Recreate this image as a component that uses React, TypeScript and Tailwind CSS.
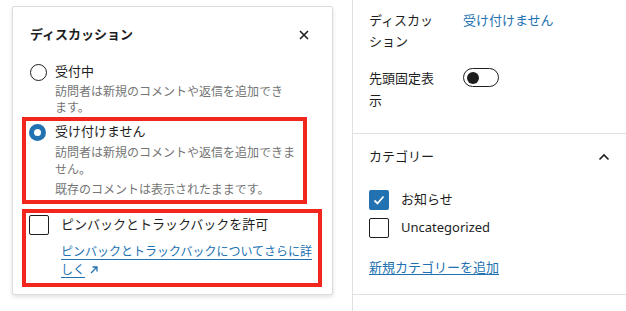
import { useState } from 'react';

const font = "font-['Noto_Sans','Noto_Sans_CJK_JP',sans-serif]";

function CloseIcon() {
  return (
    <svg width="12" height="12" viewBox="0 0 12 12" className="text-[#1e1e1e]">
      <path d="M2 2 L10 10 M10 2 L2 10" stroke="currentColor" strokeWidth="1.6" />
    </svg>
  );
}

function ChevronUp() {
  return (
    <svg width="12" height="8" viewBox="0 0 12 8" className="text-[#1e1e1e]">
      <path d="M1.5 6.5 L6 2 L10.5 6.5" stroke="currentColor" strokeWidth="1.6" fill="none" />
    </svg>
  );
}

function Checkbox({ checked }: { checked?: boolean }) {
  if (checked) {
    return (
      <span className="w-5 h-5 rounded-[2px] bg-[#2271b1] flex items-center justify-center shrink-0">
        <svg width="14" height="14" viewBox="0 0 14 14">
          <path d="M2.5 7.5 L5.5 10.5 L11.5 3.5" stroke="white" strokeWidth="1.8" fill="none" />
        </svg>
      </span>
    );
  }
  return <span className="w-5 h-5 rounded-[2px] border border-[#1e1e1e] bg-white shrink-0" />;
}

function Radio({ checked }: { checked?: boolean }) {
  if (checked) {
    return (
      <span className="w-[17px] h-[17px] rounded-full bg-[#2271b1] flex items-center justify-center shrink-0">
        <span className="w-[7px] h-[7px] rounded-full bg-white" />
      </span>
    );
  }
  return <span className="w-[17px] h-[17px] rounded-full border-[1.5px] border-[#1e1e1e] bg-white shrink-0" />;
}

function ExternalArrow() {
  return (
    <svg width="10" height="10" viewBox="0 0 10 10" className="inline-block ml-[4px] align-[-1px] text-[#2271b1]">
      <path d="M2 8 L8 2 M3.5 2 L8 2 L8 6.5" stroke="currentColor" strokeWidth="1.3" fill="none" />
    </svg>
  );
}

function DiscussionPopover() {
  return (
    <div className="ml-[12px] mt-[6px] w-[321px] h-[289px] border border-[#dcdcde] rounded-[2px] bg-white shadow-[0_2px_4px_rgba(0,0,0,0.12)] px-[17px] pt-[17px]">
      <div className="flex items-center justify-between h-[22px]">
        <h2 className="text-[13px] font-bold text-[#1e1e1e]">ディスカッション</h2>
        <span className="mr-[5px] flex"><CloseIcon /></span>
      </div>

      <div className="mt-4">
        <label className="flex items-center gap-[8px] h-5">
          <Radio />
          <span className="text-[13px] text-[#1e1e1e]">受付中</span>
        </label>
        <p className="ml-[25px] mt-[2px] text-[12px] leading-[16px] text-[#757575]">
          訪問者は新規のコメントや返信を追加でき<br />ます。
        </p>
      </div>

      <div className="-ml-2 mt-[1px] w-[285px] border-4 border-[#f3261d] pl-[3px] pt-[1px] pb-[2px]">
        <label className="flex items-center gap-[9px] h-5">
          <Radio checked />
          <span className="text-[13px] text-[#1e1e1e]">受け付けません</span>
        </label>
        <p className="ml-[26px] mt-[2px] text-[12px] leading-[17px] text-[#757575]">
          訪問者は新規のコメントや返信を追加できま<br />せん。
        </p>
        <p className="ml-[26px] mt-[3px] text-[12px] leading-[17px] text-[#757575]">
          既存のコメントは表示されたままです。
        </p>
      </div>

      <div className="-ml-2 mt-[5px] w-[300px] border-4 border-[#f3261d] pl-[3px] pt-[2px] pb-[4px]">
        <label className="flex items-center gap-3 h-5">
          <Checkbox />
          <span className="text-[13px] text-[#1e1e1e]">ピンバックとトラックバックを許可</span>
        </label>
        <p className="ml-[32px] mt-2 text-[12px] leading-[18px]">
          <a className="text-[#2271b1] underline underline-offset-[3px]">
            ピンバックとトラックバックについてさらに詳<br />しく
          </a>
          <ExternalArrow />
        </p>
      </div>
    </div>
  );
}

function Sidebar() {
  const [sticky] = useState(false);
  return (
    <div className="flex-1 border-l border-[#e0e0e0] h-full">
      <div className="pl-4 pt-[10px] pb-[22px] border-b border-[#e0e0e0]">
        <div className="flex">
          <span className="w-[94px] pr-6 text-[13px] leading-[21px] text-[#1e1e1e]">ディスカッション</span>
          <span className="text-[13px] leading-[21px] text-[#2271b1]">受け付けません</span>
        </div>
        <div className="flex mt-[15px]">
          <span className="w-[94px] pr-6 text-[13px] leading-[22px] text-[#1e1e1e]">先頭固定表示</span>
          <span className="mt-[1px] w-9 h-[19px] rounded-full border border-[#1e1e1e] flex items-center px-[3px]">
            <span className={sticky ? 'ml-auto w-3 h-3 rounded-full bg-[#1e1e1e]' : 'w-3 h-3 rounded-full bg-[#1e1e1e]'} />
          </span>
        </div>
      </div>

      <div className="pl-4 pr-4 pt-[13px] pb-[17px] border-b border-[#e0e0e0]">
        <div className="flex items-center justify-between h-5">
          <span className="text-[13px] text-[#1e1e1e]">カテゴリー</span>
          <ChevronUp />
        </div>
        <div className="mt-[23px] flex flex-col gap-2">
          <label className="flex items-center gap-3">
            <Checkbox checked />
            <span className="text-[13px] text-[#1e1e1e]">お知らせ</span>
          </label>
          <label className="flex items-center gap-3">
            <Checkbox />
            <span className="text-[13px] text-[#1e1e1e]">Uncategorized</span>
          </label>
        </div>
        <a className="block mt-[19px] text-[13px] leading-5 text-[#2271b1] underline underline-offset-2">新規カテゴリーを追加</a>
      </div>
    </div>
  );
}

export default function App() {
  return (
    <div className={`w-[626px] h-[311px] bg-white flex overflow-hidden ${font}`}>
      <div className="w-[352px] shrink-0">
        <DiscussionPopover />
      </div>
      <Sidebar />
    </div>
  );
}
